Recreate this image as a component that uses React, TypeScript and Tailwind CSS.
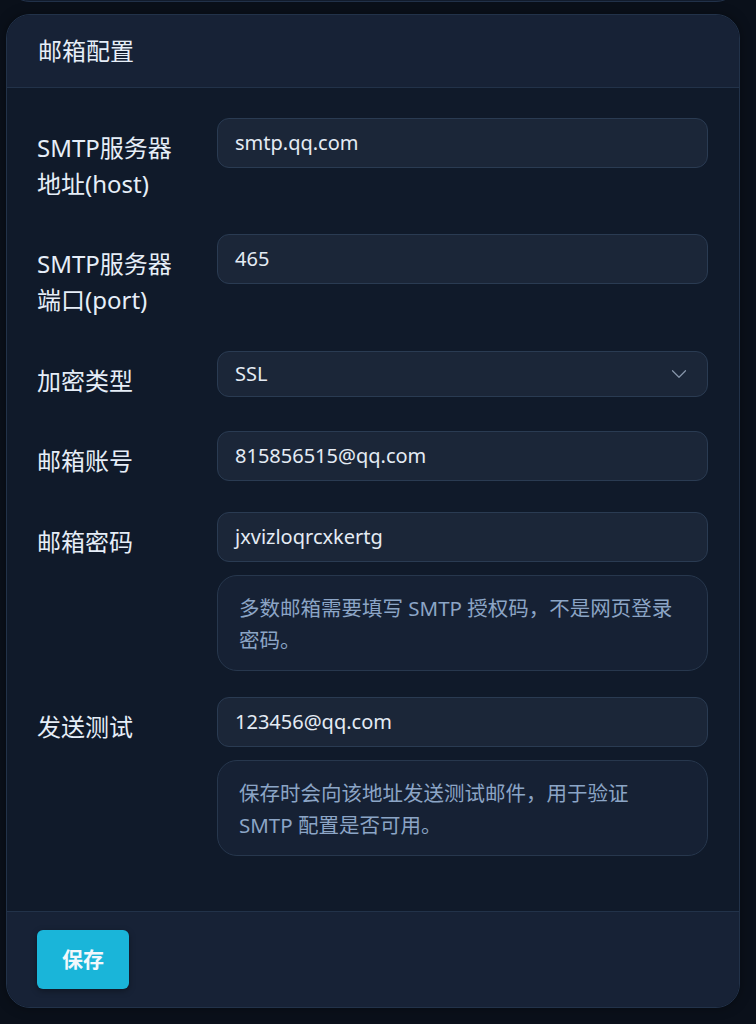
import React from 'react'
import { ChevronDown } from 'lucide-react'

const font = "font-['Noto_Sans','Noto_Sans_CJK_SC',sans-serif]"

const Field: React.FC<{ value: string }> = ({ value }) => (
  <div className="h-[50px] rounded-[12px] border border-[#2a3b52] bg-[#1b2638] px-[17px] flex items-center text-[20px] text-[#e4ebf4]">
    {value}
  </div>
)

const Hint: React.FC<{ children: React.ReactNode }> = ({ children }) => (
  <div className="mt-[13px] h-[96px] rounded-[20px] border border-[#27374d] bg-[#162134] pl-[21px] pr-[20px] pt-[16px] text-[20.5px] leading-[32px] text-[#8ca5c6] whitespace-nowrap">
    {children}
  </div>
)

const Row: React.FC<{ label: React.ReactNode; className?: string; children: React.ReactNode }> = ({
  label,
  className = '',
  children,
}) => (
  <div className={`flex items-start ${className}`}>
    <div className="w-[180px] shrink-0 pt-[12px] text-[24px] leading-[36px] text-[#e6eef8]">{label}</div>
    <div className="flex-1 min-w-0">{children}</div>
  </div>
)

export default function App() {
  return (
    <div className={`min-h-screen bg-[#0a101a] pb-[16px] ${font}`}>
      {/* previous card edge */}
      <div className="ml-[6px] w-[734px] h-[26px] -mt-[24px] rounded-b-[24px] border border-[#22324a] bg-[#121c2d]" />

      <div className="ml-[6px] mt-[12px] w-[734px] rounded-[24px] border border-[#223249] bg-[#101a2a] overflow-hidden shadow-[0_0_12px_rgba(0,0,0,0.35)]">
        {/* Header */}
        <div className="h-[73px] flex items-center px-[31px] bg-[#172236] border-b border-[#223249] text-[24px] text-[#e6eef8]">
          邮箱配置
        </div>

        {/* Body */}
        <div className="pt-[30px] pb-[55px] pl-[30px] pr-[31px] flex flex-col">
          <Row label={<>SMTP服务器<br />地址(host)</>}>
            <Field value="smtp.qq.com" />
          </Row>

          <Row label={<>SMTP服务器<br />端口(port)</>} className="mt-[32px]">
            <Field value="465" />
          </Row>

          <Row label="加密类型" className="mt-[33px]">
            <div className="h-[46px] rounded-[12px] border border-[#2a3b52] bg-[#1b2638] pl-[17px] pr-[15px] flex items-center justify-between text-[20px] text-[#e4ebf4]">
              <span>SSL</span>
              <ChevronDown className="w-[26px] h-[26px] text-[#8796ab]" strokeWidth={1.1} />
            </div>
          </Row>

          <Row label="邮箱账号" className="mt-[32px]">
            <Field value="815856515@qq.com" />
          </Row>

          <Row label="邮箱密码" className="mt-[31px]">
            <Field value="jxvizloqrcxkertg" />
            <Hint>
              多数邮箱需要填写 SMTP 授权码，不是网页登录
              <br />
              密码。
            </Hint>
          </Row>

          <Row label="发送测试" className="mt-[26px]">
            <Field value="123456@qq.com" />
            <Hint>
              保存时会向该地址发送测试邮件，用于验证
              <br />
              SMTP 配置是否可用。
            </Hint>
          </Row>
        </div>

        {/* Footer */}
        <div className="border-t border-[#223249] bg-[#172236] px-[30px] py-[18px]">
          <button className="w-[92px] h-[59px] rounded-[6px] bg-[#1ab5d9] text-[21px] font-bold text-[#f2f8fc] shadow-[0_2px_6px_rgba(0,0,0,0.35)]">
            保存
          </button>
        </div>
      </div>
    </div>
  )
}
